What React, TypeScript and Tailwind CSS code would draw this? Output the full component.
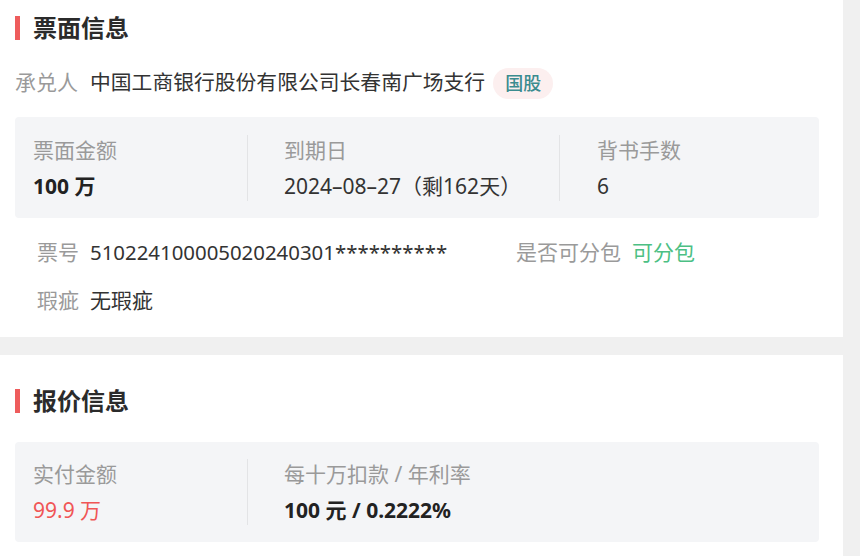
const font = { fontFamily: '"Noto Sans", "Noto Sans CJK SC", sans-serif' };

const SectionTitle = ({ text }: { text: string }) => (
  <div className="flex items-center gap-[13px]">
    <div className="w-[5px] h-[24px] bg-[#ee5c5c]" />
    <div className="text-[24px] leading-[24px] font-bold text-[#2b2b2b]">{text}</div>
  </div>
);

const Divider = () => <div className="w-px h-[66px] bg-[#e3e4e6]" />;

const Stat = ({ label, value, valueClass }: { label: string; value: string; valueClass: string }) => (
  <div className="flex flex-col gap-[8px]">
    <div className="text-[21px] leading-[28px] text-[#9a9a9a]">{label}</div>
    <div className={`text-[21px] leading-[28px] ${valueClass}`}>{value}</div>
  </div>
);

export default function App() {
  return (
    <div style={font} className="w-[860px] h-[556px] bg-[#f0f0f0] overflow-hidden flex flex-col">
      {/* 票面信息 */}
      <div className="w-[843px] h-[337px] bg-white px-[15px] pt-[16px]">
        <SectionTitle text="票面信息" />

        <div className="mt-[27px] flex items-center h-[32px] text-[21px]">
          <span className="text-[#9a9a9a]">承兑人</span>
          <span className="ml-[12px] text-[20.8px] text-[#333]">中国工商银行股份有限公司长春南广场支行</span>
          <span className="ml-[8px] h-[31px] px-[12px] rounded-full bg-[#fcefef] text-[#3b8c8f] text-[18px] leading-[31px] font-medium">
            国股
          </span>
        </div>

        <div className="mt-[18px] w-[804px] h-[101px] bg-[#f4f5f7] rounded-[4px] flex items-center pl-[18px]">
          <div className="w-[214px]">
            <Stat label="票面金额" value="100 万" valueClass="font-bold text-[#222]" />
          </div>
          <Divider />
          <div className="w-[275px] ml-[36px]">
            <Stat label="到期日" value="2024–08–27（剩162天）" valueClass="text-[#333]" />
          </div>
          <Divider />
          <div className="ml-[37px]">
            <Stat label="背书手数" value="6" valueClass="text-[#333]" />
          </div>
        </div>

        <div className="mt-[20px] pl-[22px] flex flex-col gap-[20px] text-[21px] leading-[28px]">
          <div className="flex">
            <div className="w-[479px] flex gap-[11px]">
              <span className="text-[#9a9a9a]">票号</span>
              <span className="text-[20.4px] text-[#333]">510224100005020240301**********</span>
            </div>
            <div className="flex gap-[11px]">
              <span className="text-[#9a9a9a]">是否可分包</span>
              <span className="text-[#4cbf84]">可分包</span>
            </div>
          </div>
          <div className="flex gap-[11px]">
            <span className="text-[#9a9a9a]">瑕疵</span>
            <span className="text-[#333]">无瑕疵</span>
          </div>
        </div>
      </div>

      {/* 报价信息 */}
      <div className="mt-[18px] w-[843px] flex-1 bg-white px-[15px] pt-[34px]">
        <SectionTitle text="报价信息" />

        <div className="mt-[29px] w-[804px] h-[100px] bg-[#f4f5f7] rounded-[4px] flex items-center pl-[18px]">
          <div className="w-[214px]">
            <Stat label="实付金额" value="99.9 万" valueClass="text-[#f05656]" />
          </div>
          <Divider />
          <div className="ml-[36px]">
            <Stat label="每十万扣款 / 年利率" value="100 元 / 0.2222%" valueClass="font-bold text-[#222]" />
          </div>
        </div>
      </div>
    </div>
  );
}
